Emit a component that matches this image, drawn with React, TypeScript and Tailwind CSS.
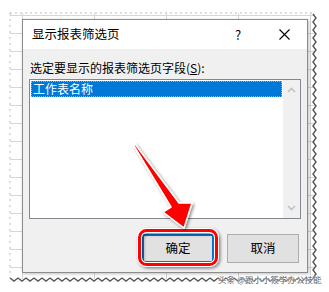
import React from "react";

const font = { fontFamily: '"Noto Sans CJK SC", "Noto Sans", sans-serif' };

function Chevron({ up }: { up?: boolean }) {
  return (
    <svg width="9" height="6" viewBox="0 0 9 6" className="block">
      <polyline
        points={up ? "1,5 4.5,1.5 8,5" : "1,1 4.5,4.5 8,1"}
        fill="none"
        stroke="#c2c2c2"
        strokeWidth="1.6"
      />
    </svg>
  );
}

function Paper() {
  // torn edges of the pasted screenshot
  const right: string[] = [];
  for (let y = 14; y <= 278; y += 4) right.push(`${y % 8 === 6 ? 313 : 316},${y}`);
  const bottom: string[] = [];
  for (let x = 10; x <= 316; x += 4) bottom.push(`${x},${x % 8 === 2 ? 278 : 281}`);
  return (
    <svg className="absolute inset-0 pointer-events-none" width="329" height="292">
      <polyline points={right.join(" ")} fill="none" stroke="#555" strokeWidth="1.4" />
      <polyline points={bottom.join(" ")} fill="none" stroke="#555" strokeWidth="1.4" />
      <line x1="10" y1="13" x2="314" y2="13" stroke="#bbb" strokeDasharray="2 3" />
      <line x1="10" y1="13" x2="10" y2="278" stroke="#bbb" strokeDasharray="2 4" />
    </svg>
  );
}

function Marks() {
  return (
    <svg className="absolute inset-0 pointer-events-none" width="329" height="292">
      <defs>
        <filter id="sh" x="-30%" y="-30%" width="160%" height="160%">
          <feDropShadow dx="1.5" dy="1.5" stdDeviation="1.4" floodColor="#000" floodOpacity="0.45" />
        </filter>
      </defs>
      <rect x="139.5" y="230.5" width="77" height="34" rx="7" fill="none" stroke="#fff" strokeWidth="5" filter="url(#sh)" />
      <rect x="139.5" y="230.5" width="77" height="34" rx="7" fill="none" stroke="#f00" strokeWidth="3" />
      <polygon
        points="135,144 179,203 192,203 184,228 163,212 171,207 134,146"
        fill="#f00"
        stroke="#fff"
        strokeWidth="1.5"
        strokeLinejoin="round"
        filter="url(#sh)"
      />
    </svg>
  );
}

export default function App() {
  return (
    <div
      className="relative w-[329px] h-[292px] overflow-hidden bg-white text-[12px] text-black"
      style={font}
    >
      <div className="absolute left-[10px] top-[13px] w-[305px] h-[266px] bg-[linear-gradient(to_right,#d6d6d6_1px,transparent_1px),linear-gradient(to_bottom,#d6d6d6_1px,transparent_1px)] bg-[size:72px_18px] bg-[position:12px_2px]" />
      <Paper />

      <div className="relative pt-[19px] pl-[22px]">
        <div className="w-[286px] h-[254px] flex flex-col border border-[#8c8c8c] bg-[#f0f0f0] shadow-[1px_1px_3px_rgba(0,0,0,0.25)]">
          <div className="h-[29px] shrink-0 bg-white flex items-center pl-[9px]">
            <span className="flex-1 text-[12.5px]">显示报表筛选页</span>
            <span className="w-[20px] text-center text-[13px] mr-[31px]">?</span>
            <svg width="11" height="11" viewBox="0 0 11 11" className="mr-[17px]">
              <path d="M0.5 0.5 L10.5 10.5 M10.5 0.5 L0.5 10.5" stroke="#000" strokeWidth="1.1" />
            </svg>
          </div>

          <div className="flex-1 flex flex-col px-[6px]">
            <div className="pl-[1px] pt-[10px] h-[30px] leading-[18px]">
              选定要显示的报表筛选页字段(<span className="underline">S</span>):
            </div>
            <div className="h-[140px] flex border border-[#828790] bg-white">
              <div className="flex-1 p-[1px]">
                <div className="h-[16px] bg-[#0078d7] text-white leading-[16px] pl-[2px] outline-1 outline-dotted outline-[#f0a030] -outline-offset-1">
                  工作表名称
                </div>
              </div>
              <div className="w-[17px] bg-[#f0f0f0] flex flex-col items-center justify-between py-[7px]">
                <Chevron up />
                <Chevron />
              </div>
            </div>

            <div className="flex justify-end gap-[13px] mt-[15px] pr-[2px]">
              <button className="w-[72px] h-[29px] bg-[#e1e1e1] border border-[#0078d7] shadow-[inset_0_0_0_1px_#0078d7] text-[12.5px]">
                确定
              </button>
              <button className="w-[72px] h-[29px] bg-[#e1e1e1] border border-[#adadad] text-[12.5px]">
                取消
              </button>
            </div>
          </div>
        </div>
      </div>

      <Marks />
      <div className="absolute left-[218px] top-[274px] whitespace-nowrap text-[8.5px] leading-[11px] text-[#666] [text-shadow:0_0_2px_#fff,0_0_2px_#fff]">
        头条 @跟小小筱学办公技能
      </div>
    </div>
  );
}
